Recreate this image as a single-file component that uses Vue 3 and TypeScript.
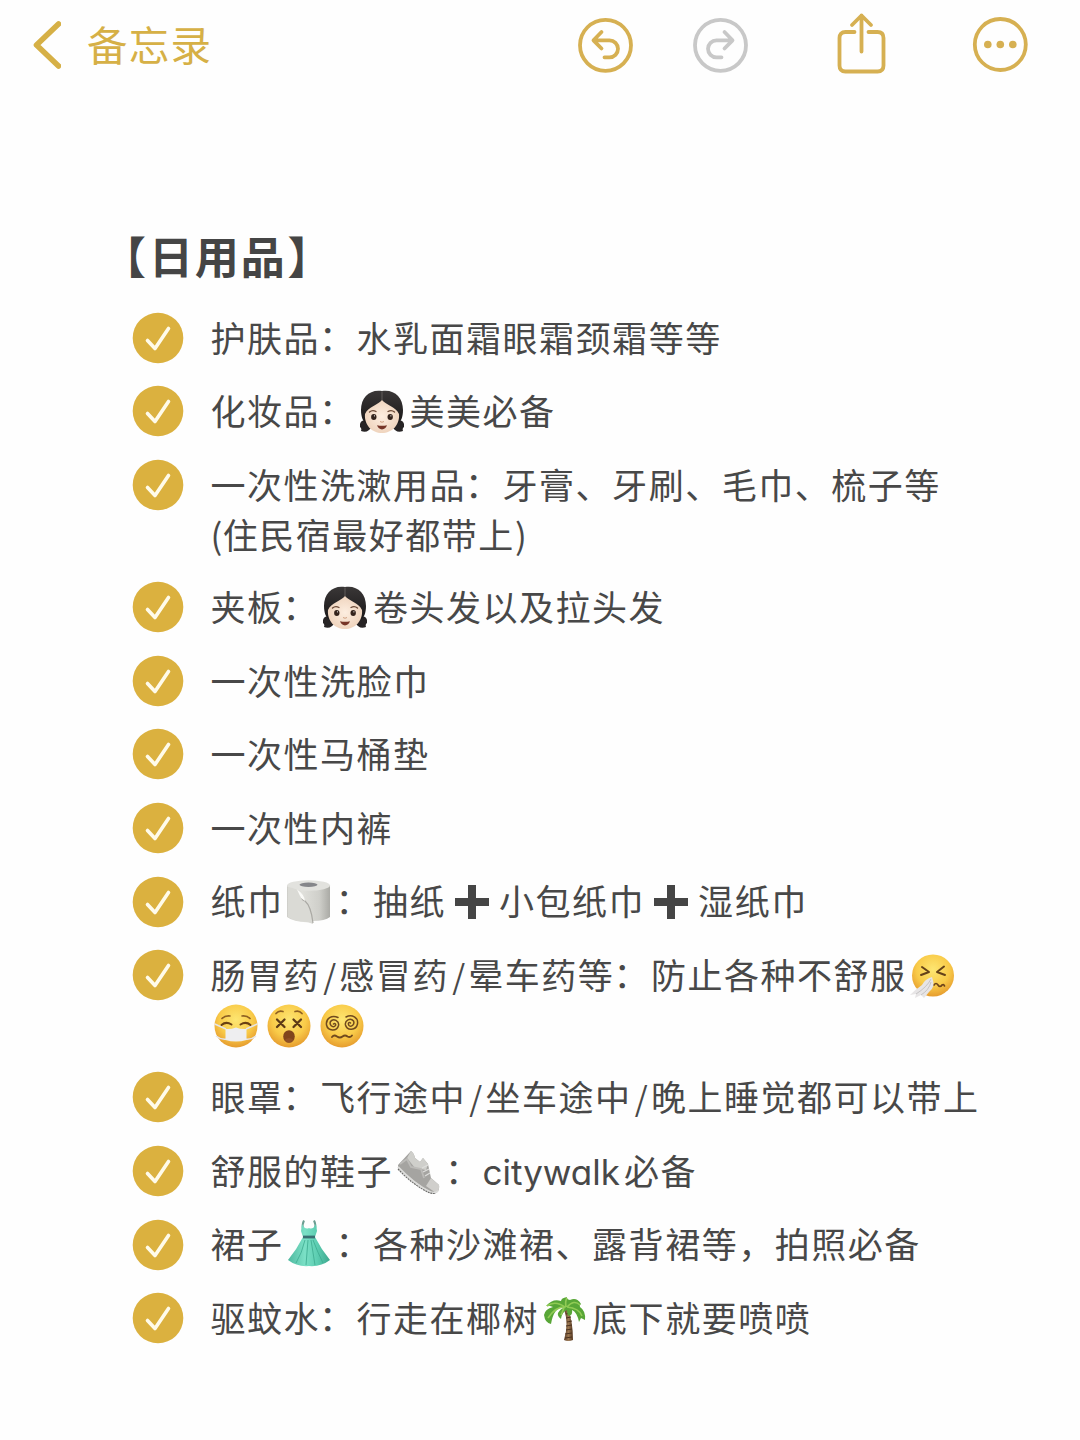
<template>
  <div class="notes-page">
    <!-- emoji sprite -->
    <svg class="sprite" aria-hidden="true">
      <defs>
        <radialGradient id="face" cx="50%" cy="36%" r="65%">
          <stop offset="0" stop-color="#fde672" />
          <stop offset="0.6" stop-color="#f9cb49" />
          <stop offset="1" stop-color="#e59a2d" />
        </radialGradient>
        <radialGradient id="skin" cx="50%" cy="50%" r="55%">
          <stop offset="0" stop-color="#fdeee0" />
          <stop offset="1" stop-color="#eed2bb" />
        </radialGradient>
        <linearGradient id="hair" x1="0" y1="0" x2="0" y2="1">
          <stop offset="0" stop-color="#3a3737" />
          <stop offset="1" stop-color="#191718" />
        </linearGradient>
        <linearGradient id="roll" x1="0" y1="0" x2="1" y2="0">
          <stop offset="0" stop-color="#cfcfca" />
          <stop offset="0.35" stop-color="#e0e0db" />
          <stop offset="0.75" stop-color="#cfcfca" />
          <stop offset="1" stop-color="#aaaaa5" />
        </linearGradient>
        <linearGradient id="cloth" x1="0" y1="0" x2="1" y2="0">
          <stop offset="0" stop-color="#4fb9a0" />
          <stop offset="0.4" stop-color="#7be0c6" />
          <stop offset="0.7" stop-color="#5ccdb1" />
          <stop offset="1" stop-color="#3da78e" />
        </linearGradient>
        <linearGradient id="trunk" x1="0" y1="0" x2="1" y2="0">
          <stop offset="0" stop-color="#5b3d28" />
          <stop offset="0.5" stop-color="#9a7650" />
          <stop offset="1" stop-color="#553822" />
        </linearGradient>
      </defs>

      <symbol id="girl" viewBox="0 0 44 44">
        <path d="M5 30 Q-1 31 0 37 Q2 38 1 41 Q8 44 12 36 L9 30Z M39 30 Q45 31 44 37 Q42 38 43 41 Q36 44 32 36 L35 30Z" fill="#272425" />
        <path d="M22 1 C10 -1 1 7 1 20 C1 27 3 32 7 34 H37 C41 32 43 27 43 20 C43 7 34 -1 22 1Z" fill="url(#hair)" />
        <path d="M22 10 C18 15 8 17 5 24 C4 35 12 43 22 43 C32 43 40 35 39 24 C36 17 26 15 22 10Z" fill="url(#skin)" />
        <path d="M22 1.500 V10" stroke="#6d6865" stroke-width="0.800" />
        <path d="M9.500 22 Q12.500 19.500 16 21.500 M28 21.500 Q31.500 19.500 34.500 22" fill="none" stroke="#6d4b38" stroke-width="1.400" stroke-linecap="round" />
        <ellipse cx="13.800" cy="27" rx="2.700" ry="3" fill="#33231c" />
        <ellipse cx="30.200" cy="27" rx="2.700" ry="3" fill="#33231c" />
        <circle cx="14.500" cy="25.800" r="0.600" fill="#fff" />
        <circle cx="30.900" cy="25.800" r="0.600" fill="#fff" />
        <path d="M20 31.500 Q22 33 24 31.500" fill="none" stroke="#d0a384" />
        <path d="M17 35.300 Q22 36.300 27 35.300 Q25.500 39.400 22 39.400 Q18.500 39.400 17 35.300Z" fill="#763527" />
      </symbol>

      <symbol id="paper" viewBox="0 0 44 44">
        <path d="M0 5 V37 Q8 43 24 42 L26 44 V41 Q38 41 43 37 V5Z" fill="url(#roll)" />
        <ellipse cx="21.500" cy="5.500" rx="21.500" ry="5.200" fill="#e2e2de" />
        <ellipse cx="21.500" cy="4.700" rx="9" ry="2.200" fill="#85868a" />
        <path d="M1 7 Q11 8 14 15 Q17 17 18 21 Q23 24 26 44 Q20 41 15 41.500 Q6 40 1 37Z" fill="#dadad5" />
        <path d="M14 14 Q14 20 18 21 Q24 26 26 43" fill="none" stroke="#aaa9a4" stroke-width="1.200" />
        <path d="M10 9.500 L14 18 L18 21 Q17 14 10 9.500Z" fill="#fafaf7" />
      </symbol>

      <symbol id="plus" viewBox="0 0 44 44">
        <path d="M18 5 H26 V18 H39 V26 H26 V39 H18 V26 H5 V18 H18Z" fill="#454545" />
      </symbol>

      <symbol id="sneeze" viewBox="0 0 44 44">
        <circle cx="23" cy="21.500" r="21" fill="url(#face)" />
        <path d="M12 13 L19 18 L11 21 M34 12.500 L27 18 L35 21" fill="none" stroke="#654219" stroke-width="2" stroke-linecap="round" stroke-linejoin="round" />
        <path d="M24 31 Q26 28 28 31 Q30 34 32 31 Q34 30 34.500 32" fill="none" stroke="#6d431b" stroke-width="1.700" stroke-linecap="round" />
        <path d="M22 23 Q15 25 12 31 Q6 35 0 41 L6 40 L5 44 L11 41 L14 44 L19 38 Q26 33 22 23Z" fill="#e7e5e6" />
        <path d="M21 25 Q17 33 6 40 M21 28 Q19 36 11 41" fill="none" stroke="#c2bfbf" stroke-width="0.900" />
      </symbol>

      <symbol id="mask" viewBox="0 0 44 44">
        <circle cx="22" cy="22" r="21.500" fill="url(#face)" />
        <path d="M8 14.500 Q11 11.500 16 12 M28 12 Q33 11.500 36 14.500" fill="none" stroke="#8d5f22" stroke-width="1.700" stroke-linecap="round" />
        <path d="M7.500 21 Q12 17 17.500 20.500 M26.500 20.500 Q32 17 36.500 21" fill="none" stroke="#694014" stroke-width="2" stroke-linecap="round" />
        <path d="M0.700 20 L12 25 M43.300 20 L32 25 M2 32 Q7 36 13 35 M42 32 Q37 36 31 35" fill="none" stroke="#e5e5e8" stroke-width="1.500" />
        <path d="M11.500 25 Q17 25.500 22 23.500 Q27 25.500 32.500 25 V36 Q22 39 11.500 36Z" fill="#eeeef0" />
      </symbol>

      <symbol id="dizzy" viewBox="0 0 44 44">
        <circle cx="22" cy="22" r="21.500" fill="url(#face)" />
        <path d="M9 9.500 Q12 6 16 7.500 M28 7.500 Q32 6 35 9.500" fill="none" stroke="#8d5f22" stroke-width="1.700" stroke-linecap="round" />
        <path d="M10 15.500 L17.500 23 M17.500 15.500 L10 23 M26.500 15.500 L34 23 M34 15.500 L26.500 23" stroke="#5c3a16" stroke-width="2.300" stroke-linecap="round" />
        <ellipse cx="22" cy="32.500" rx="5.800" ry="6.300" fill="#81451c" />
        <path d="M17.500 36 Q22 32 26.500 36 Q22 41 17.500 36Z" fill="#8f5026" />
      </symbol>

      <symbol id="spiral" viewBox="0 0 44 44">
        <circle cx="22" cy="22" r="21.500" fill="url(#face)" />
        <g fill="none" stroke="#704a1e" stroke-width="1.500" stroke-linecap="round">
          <path d="M13.500 20 C15 18.500 16.500 20.500 15 22 C12.500 24 9 21 10.500 17.500 C13.500 13.500 19.500 17 18.500 21.500 C17 27.500 8 27.500 6.500 21 C5.500 14.500 12 10.500 18 13.500" />
          <path d="M30.500 19 C29 17.500 27.500 19.500 29 21.500 C31.500 23.500 35 20.500 33.500 17 C30.500 13 24.500 16.500 25.500 21 C27 27 36 26.500 37.500 20 C38.500 13.500 32 10 26 13" />
          <path d="M12 33 Q14 30.500 17 32.500 Q20 34.500 22.500 32.500 Q25 30.500 27.500 32.500 Q30 34 32 31.500" stroke-width="1.900" />
        </g>
      </symbol>

      <symbol id="shoe" viewBox="0 0 44 44">
        <path d="M1 15 L14 1 Q17 3 18 8 L23 12 L26 8 L31 14 L34 28 L42 35 Q43 40 39 43 L32 42 Q19 33 1 19Z" fill="#a5a4a1" />
        <path d="M14 1 Q17 3 18 8 L23 12 L26 8 L31 14 L29 20 L18 18 L10 8Z" fill="#cfcfcb" />
        <path d="M34 28 L42 35 Q43 40 39 43 L29 36Z" fill="#d0cfcc" />
        <path d="M3 14 L10 9 L14 17 L24 19 L27 28" fill="none" stroke="#bcbbb8" stroke-width="1.800" />
        <path d="M25 18 L31 15 M26 22 L32 19 M28 26 L33 23" stroke="#dededc" stroke-width="1.300" />
        <path d="M1 17 Q17 34 33 42 Q37 44 41 41" fill="none" stroke="#dcdcda" stroke-width="2" />
        <path d="M1 19 Q17 36 33 43 L39 44" fill="none" stroke="#686866" stroke-width="1.100" stroke-dasharray="2 0.7" />
      </symbol>

      <symbol id="dress" viewBox="0 0 44 48">
        <path d="M16 10 Q15 5 17 1.500 M28 10 Q29 5 27 1.500" fill="none" stroke="#6b9d91" stroke-width="2" />
        <path d="M15 5 Q18 11 22 9 Q26 11 29 5 L30 12 L28 18 Q34 30 43 41 Q34 48 22 47 Q10 48 1 41 Q10 30 16 18 L14 12Z" fill="url(#cloth)" />
        <path d="M16 18 H28" stroke="#396f72" stroke-width="2.800" />
        <path d="M18 21 Q15 34 9 44 M21 21 L19 46 M24 21 L28 46 M26 21 Q31 34 36 44" fill="none" stroke="#3caa8f" stroke-width="0.800" />
      </symbol>

      <symbol id="palm" viewBox="0 0 44 44">
        <path d="M21 12 Q26 27 21 43 Q25 45 30 43 Q30 25 25 12Z" fill="url(#trunk)" />
        <path d="M23 17 L27 16 M23 21 L28 20 M24 25 L29 24 M23 29 L29 28 M23 33 L29 32 M22 37 L29 36 M22 41 L29 40" stroke="#4b321f" />
        <path d="M22 10 Q11 9 8 27 Q2 26 1 18 Q2 12 10 10 Q5 8 3 9 Q10 1 18 4 Q18 1 24 0 Q23 2 27 3 Q34 0 38 7 Q36 8 37 10 Q43 14 42 23 L38 21 L36 25 Q34 15 29 13 Q30 18 26 19 Q24 18 24 13 Q19 15 18 22 Q14 19 15 16 Q17 12 22 10Z" fill="#58a637" />
        <path d="M22 10 Q12 3 4 9 M23 10 Q13 9 5 21 M24 10 Q31 2 37 8 M24 10 Q36 11 39 19 M23 10 Q22 4 24 1 M21 11 L18 18" fill="none" stroke="#91cb55" stroke-width="1.600" />
      </symbol>
    </svg>

    <header class="toolbar">
      <button class="back">
        <svg width="30" height="50" viewBox="0 0 30 50" fill="none">
          <path d="M27.500 4 L5.500 25 L27.500 46" stroke="#d6b046" stroke-width="5.600" stroke-linecap="round" stroke-linejoin="round" />
        </svg>
        <span class="back-label">备忘录</span>
      </button>
      <div class="actions">
        <svg class="undo" width="56" height="56" viewBox="0 0 56 56">
          <circle cx="28.500" cy="28.300" r="25.500" />
          <path d="M24.500 15 L16.500 23.300 L24.500 31.500 M16.500 23.300 H32.500 A8.500 8.500 0 0 1 32.500 40.300 H27.500" />
        </svg>
        <svg class="redo" width="56" height="56" viewBox="0 0 56 56">
          <circle cx="28.500" cy="28.300" r="25.500" />
          <path d="M32.500 15 L40.500 23.300 L32.500 31.500 M40.500 23.300 H24.500 A8.500 8.500 0 0 0 24.500 40.300 H29.500" />
        </svg>
        <svg class="share" width="50" height="64" viewBox="0 0 50 64">
          <path d="M18.500 21 H9.500 Q3.500 21 3.500 27 V54.500 Q3.500 60.500 9.500 60.500 H41.500 Q47.500 60.500 47.500 54.500 V27 Q47.500 21 41.500 21 H32.500" />
          <path d="M25.500 40.500 V4.500 M16 14 L25.500 4.500 L35 14" />
        </svg>
        <svg class="more" width="56" height="56" viewBox="0 0 56 56">
          <circle cx="28.300" cy="28.500" r="25.500" />
          <g class="dots">
            <circle cx="15.800" cy="28.500" r="3.800" />
            <circle cx="28.300" cy="28.500" r="3.800" />
            <circle cx="40.800" cy="28.500" r="3.800" />
          </g>
        </svg>
      </div>
    </header>

    <main class="note">
      <h1 class="note-title"><span class="bracket open">【</span>日用品<span class="bracket close">】</span></h1>
      <ul class="checklist">
        <li v-for="(item, i) in items" :key="i" class="item">
          <svg class="check" width="52" height="52" viewBox="0 0 52 52">
            <circle cx="26" cy="26" r="25.300" fill="#dbb13f" />
            <path d="M15.500 28.500 L23 36.500 L36.500 16.500" fill="none" stroke="#fffbea" stroke-width="3.600" stroke-linecap="round" stroke-linejoin="round" />
          </svg>
          <div class="text">
            <div v-for="(line, j) in item" :key="j" class="line">
              <template v-for="(part, k) in line" :key="k">
                <svg v-if="part.kind === 'emoji'" class="emoji" :class="part.value"><use :href="'#' + part.value" /></svg>
                <span v-else :class="part.kind">{{ part.value }}</span>
              </template>
            </div>
          </div>
        </li>
      </ul>
    </main>
  </div>
</template>

<script setup lang="ts">
interface Part {
  kind: 'emoji' | 'slash' | 'paren' | 'latin' | 'colon' | 'cjk';
  value: string;
}

// :name: = emoji, \n = second line
const notes: string[] = [
  '护肤品：水乳面霜眼霜颈霜等等',
  '化妆品：:girl:美美必备',
  '一次性洗漱用品：牙膏、牙刷、毛巾、梳子等\n(住民宿最好都带上)',
  '夹板：:girl:卷头发以及拉头发',
  '一次性洗脸巾',
  '一次性马桶垫',
  '一次性内裤',
  '纸巾:paper:：抽纸:plus:小包纸巾:plus:湿纸巾',
  '肠胃药/感冒药/晕车药等：防止各种不舒服:sneeze:\n:mask::dizzy::spiral:',
  '眼罩：飞行途中/坐车途中/晚上睡觉都可以带上',
  '舒服的鞋子:shoe:：citywalk必备',
  '裙子:dress:：各种沙滩裙、露背裙等，拍照必备',
  '驱蚊水：行走在椰树:palm:底下就要喷喷',
];

const toPart = (s: string): Part => {
  if (/^:\w+:$/.test(s)) return { kind: 'emoji', value: s.slice(1, -1) };
  if (s === '/') return { kind: 'slash', value: s };
  if (s === '：') return { kind: 'colon', value: s };
  if (s === '(' || s === ')') return { kind: 'paren', value: s };
  if (/^[a-z]+$/.test(s)) return { kind: 'latin', value: s };
  return { kind: 'cjk', value: s };
};

const parseLine = (line: string): Part[] =>
  line.split(/(:\w+:|\/|：|[()]|[a-z]+)/).filter(Boolean).map(toPart);

const items: Part[][][] = notes.map((n) => n.split('\n').map(parseLine));
</script>

<style>
html, body { margin: 0; background: #fefefe; }
</style>

<style scoped>
.notes-page {
  width: 1080px; height: 1440px; overflow: hidden;
  background: #fefefe; color: #484848;
  font-family: "Inter", "Noto Sans CJK SC", sans-serif;
}
.sprite { position: absolute; width: 0; height: 0; }

.toolbar {
  display: flex; align-items: center; justify-content: space-between;
  height: 90px; padding: 0 52px 0 31px; box-sizing: border-box;
}
.back {
  display: flex; align-items: center; gap: 26px;
  padding: 0; border: 0; background: none; color: #d6b046;
  font-family: "Noto Sans CJK SC", sans-serif;
}
.back-label { margin-top: -2px; font-size: 40.5px; line-height: 60px; letter-spacing: 1.3px; }

.actions { display: flex; align-items: center; }
.actions svg { fill: none; stroke: #d6b052; stroke-width: 3.8; stroke-linecap: round; stroke-linejoin: round; }
.actions .redo { margin-left: 59px; stroke: #c8c8c8; }
.actions .share { margin: -5px 86px 0 88px; }
.actions .more { margin-top: -2px; }
.actions .dots { fill: #d6b052; stroke: none; }

.note { padding: 132px 0 0 103px; }
.note-title {
  margin: 0; font-size: 44px; line-height: 66px; font-weight: 700;
  letter-spacing: 1.9px; color: #454545;
  font-family: "Noto Sans CJK SC", sans-serif;
}
.bracket { display: inline-block; }
.bracket.open { transform: translateX(-1px); }
.bracket.close { transform: translateX(1px); }
.checklist {
  display: flex; flex-direction: column; gap: 24.6px;
  margin: 0; padding: 25.4px 0 0 29px; list-style: none;
}
.item { display: flex; gap: 26.4px; }
.check { flex: none; margin: -1.500px 0; height: 52px; }
.text {
  margin: 1.2px 0 -1.2px; font-size: 35px; line-height: 48.8px;
  letter-spacing: 1.520px; white-space: nowrap;
}
.line { height: 48.8px; }
.line + .line { padding-top: 1.2px; margin-bottom: -1.2px; }
.colon { position: relative; top: -1px; margin: 0 1px 0 -1px; }
.latin { margin-right: 4px; font-feature-settings: "cv11"; letter-spacing: 0; }
.paren { font-family: "Noto Sans CJK SC", sans-serif; letter-spacing: 0.5px; line-height: 0; }
.slash {
  display: inline-block; width: 19.4px; text-align: center; letter-spacing: 0;
  font-family: "Noto Sans CJK SC", sans-serif; font-size: 33px; line-height: 0;
}
.emoji { width: 44px; height: 44px; margin: -6px 5.500px -6px 3.500px; vertical-align: -3px; }
.emoji.dress { height: 48px; vertical-align: -3px; }
</style>
